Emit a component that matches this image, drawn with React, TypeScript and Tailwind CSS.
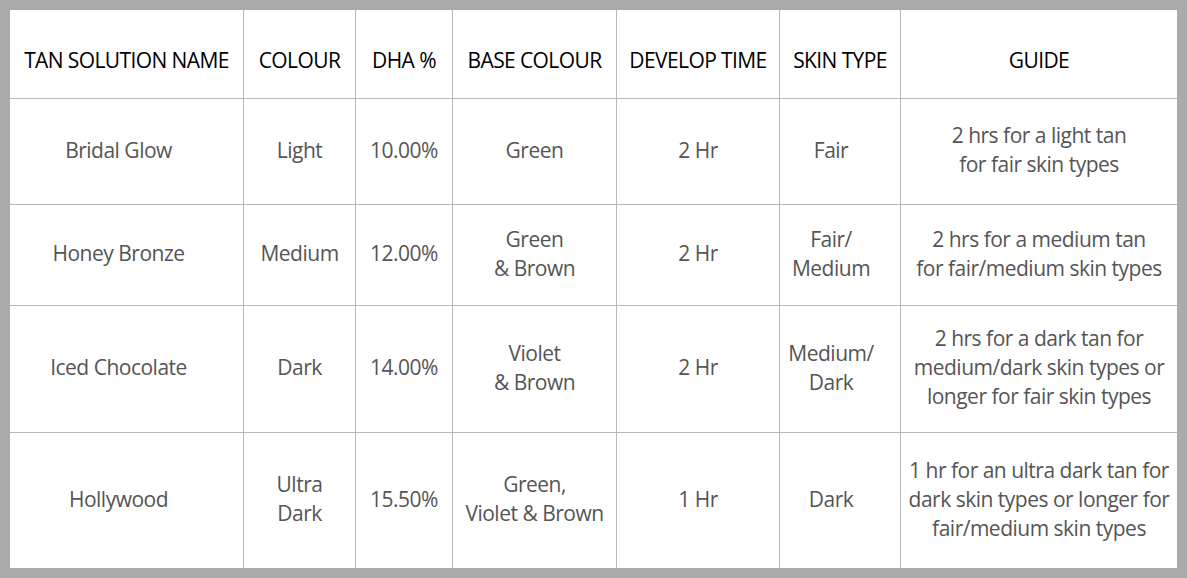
const headers = [
  "TAN SOLUTION NAME",
  "COLOUR",
  "DHA %",
  "BASE COLOUR",
  "DEVELOP TIME",
  "SKIN TYPE",
  "GUIDE",
];

const rows = [
  ["Bridal Glow", "Light", "10.00%", "Green", "2 Hr", "Fair", "2 hrs for a light tan\nfor fair skin types"],
  ["Honey Bronze", "Medium", "12.00%", "Green\n& Brown", "2 Hr", "Fair/\nMedium", "2 hrs for a medium tan\nfor fair/medium skin types"],
  ["Iced Chocolate", "Dark", "14.00%", "Violet\n& Brown", "2 Hr", "Medium/\nDark", "2 hrs for a dark tan for\nmedium/dark skin types or\nlonger for fair skin types"],
  ["Hollywood", "Ultra\nDark", "15.50%", "Green,\nViolet & Brown", "1 Hr", "Dark", "1 hr for an ultra dark tan for\ndark skin types or longer for\nfair/medium skin types"],
];

// body text in a few columns sits a little left of centre
const cellPad = ["pr-[16px]", "", "", "", "", "pr-[18px]", ""];

export default function App() {
  return (
    <div className="w-[1187px] h-[578px] bg-[#aaaaaa] p-[10px] font-['Open_Sans',sans-serif]">
      <div className="grid grid-cols-[233px_111px_96px_163px_162px_120px_276px] grid-rows-[88px_105px_100px_126px_135px] gap-px bg-[#b9b9b9] h-[558px]">
        {headers.map((h) => (
          <div key={h} className="bg-white flex items-center justify-center pt-[14px] text-center text-[21px] text-black tracking-[-0.6px] whitespace-nowrap">
            {h}
          </div>
        ))}
        {rows.map((row) =>
          row.map((cell, i) => (
            <div
              key={row[0] + i}
              className={`bg-white flex items-center justify-center pb-[3px] text-center text-[21px] leading-[29px] text-[#555555] whitespace-pre-line tracking-[-0.5px] ${cellPad[i]}`}
            >
              {cell}
            </div>
          ))
        )}
      </div>
    </div>
  );
}
